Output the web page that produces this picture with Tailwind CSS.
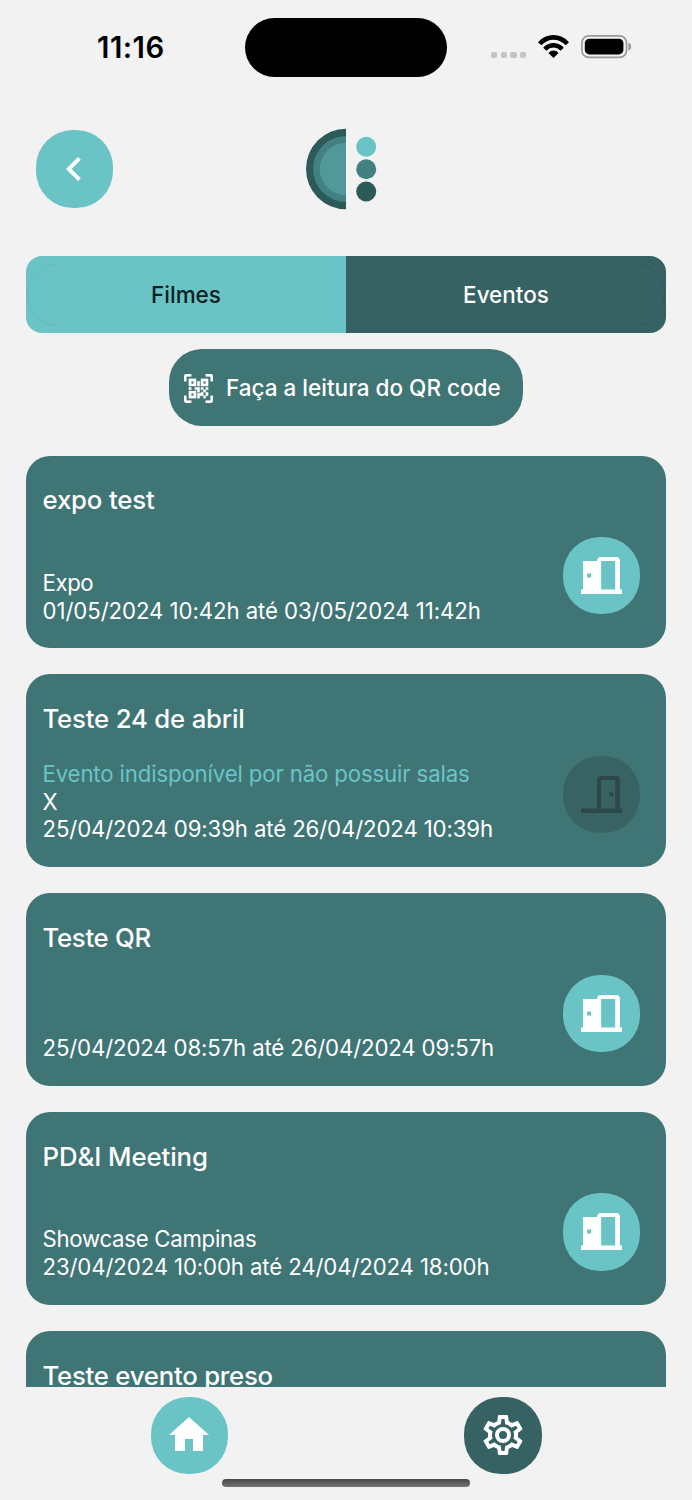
<!DOCTYPE html>
<html lang="pt-BR">
<head>
<meta charset="utf-8">
<meta name="viewport" content="width=device-width, initial-scale=1">
<title>Eventos</title>
<script src="https://cdn.jsdelivr.net/npm/@tailwindcss/browser@4"></script>
</head>
<body class="bg-[#f2f2f2] font-['Inter',sans-serif]">
<svg class="hidden" xmlns="http://www.w3.org/2000/svg">
  <symbol id="door-open" viewBox="0 0 77 77">
    <path fill-rule="evenodd" d="M20 24H34V23.500Q34 20 38 20H53Q56.700 20 56.700 24V52.300H58.700V56.700H18V52.300H20ZM38 24V52.300H52V24ZM24 36.300V40.300H28V36.300Z"/>
  </symbol>
  <symbol id="door-closed" viewBox="0 0 77 77">
    <path fill-rule="evenodd" d="M34 52.300V24Q34 20 38 20H53Q56.700 20 56.700 24V52.300H58.700V56.700H18V52.300ZM38 24V52.300H52V24ZM46 36.300V40.300H50V36.300Z"/>
  </symbol>
</svg>
<div class="w-[692px] h-[1500px] overflow-hidden flex flex-col">
  <header class="h-[96px] shrink-0 flex items-start pl-[97px] pt-[18px]">
    <div class="w-[148px] pt-[12px] text-[29.300px] leading-[36px] font-semibold tracking-[0.500px] whitespace-nowrap text-black">11:16</div>
    <div class="w-[202px] h-[59px] rounded-[30px] bg-black"></div>
    <div class="flex gap-[3.500px] ml-[44px] mt-[33.500px]">
      <i class="size-[6.200px] rounded-[2px] bg-[#c4c4c4]"></i><i class="size-[6.200px] rounded-[2px] bg-[#c4c4c4]"></i><i class="size-[6.200px] rounded-[2px] bg-[#c4c4c4]"></i><i class="size-[6.200px] rounded-[2px] bg-[#c4c4c4]"></i>
    </div>
    <svg class="ml-[12px] mt-[17px] w-[31px] h-[23px]" viewBox="0 0 31 23" fill="none" stroke="#000">
      <path stroke-width="4.600" d="M1.600 8.800Q7.500 2.400 15.500 2.400T29.400 8.800"/>
      <path stroke-width="4.400" d="M6.800 14.200Q10.500 10.300 15.500 10.300T24.200 14.200"/>
      <path fill="#000" stroke="none" d="M15.500 22.900L10.400 17.900Q12.600 15.600 15.500 15.600T20.600 17.900Z"/>
    </svg>
    <svg class="ml-[12px] mt-[17px] w-[51px] h-[24px]" viewBox="0 0 51 24"><rect x=".9" y=".9" width="44.600" height="21.500" rx="7" fill="none" stroke="#9b9b9b" stroke-width="1.700"/><rect x="3.800" y="3.800" width="38.600" height="15.600" rx="4.500"/><path d="M47.300 7.800Q50.200 8.700 50.200 11.700T47.300 15.500Z" fill="#9b9b9b"/></svg>
  </header>

  <nav class="h-[160px] shrink-0 flex pl-[35.500px] pt-[34px]">
    <button class="size-[77.500px] rounded-[37px] bg-[#6ac4c6] flex items-center justify-center">
      <svg class="size-[48px]" viewBox="0 0 24 24" fill="#fff"><path d="M15.410 16.580L10.830 12L15.410 7.410L14 6L8 12L14 18Z"/></svg>
    </button>
    <svg class="ml-[193px] -mt-[2px] w-[71px] h-[82px]" viewBox="0 0 71 82">
      <path fill="#2c5a59" d="M40 .8A40 40.200 0 0 0 40 81.200Z"/>
      <path fill="#438081" d="M40 8A33 33 0 0 0 40 74Z"/>
      <path fill="#509899" d="M40 14.700A26.300 26.300 0 0 0 40 67.300Z"/>
      <circle cx="60.200" cy="18.800" r="10" fill="#6ac4c6"/><circle cx="60.200" cy="41.200" r="10" fill="#438081"/><circle cx="60.200" cy="63.500" r="10" fill="#2c5a59"/>
    </svg>
  </nav>

  <div class="mx-[26px] h-[77.200px] shrink-0 flex rounded-[16px] overflow-hidden text-[22.500px] font-medium tracking-[-0.020px]">
    <button class="relative flex-1 bg-[#6ac4c6] text-[#0e2021]">Filmes
      <svg class="absolute left-0 top-0 w-[60px] h-[77px]" viewBox="0 0 60 77" fill="none" stroke="#5fb5b7" stroke-width=".6"><path d="M29 8C13 9.500 1.500 22 1.500 38.500S13 67.500 29 69.500"/></svg>
    </button>
    <button class="relative flex-1 bg-[#366263] text-white">Eventos
      <svg class="absolute right-0 top-0 w-[60px] h-[77px]" viewBox="0 0 60 77" fill="none" stroke="#2f5859" stroke-width=".6"><path d="M31 8C47 9.500 58.500 22 58.500 38.500S47 67.500 31 69.500"/></svg>
    </button>
  </div>

  <button class="mt-[16px] mx-auto w-[354px] h-[77.300px] shrink-0 rounded-[33px] bg-[#407576] flex items-center pl-[15px] gap-[13px] text-white text-[22.500px] font-medium tracking-[0.010px] whitespace-nowrap">
    <svg class="mt-px size-[29px] shrink-0" viewBox="0 0 24 24" fill="#fff" stroke="#fff" stroke-width=".25"><path d="M4,4H10V10H4V4M20,4V10H14V4H20M14,15H16V13H14V11H16V13H18V11H20V13H18V15H20V18H18V20H16V18H13V20H11V16H14V15M16,15V18H18V15H16M4,20V14H10V20H4M6,6V8H8V6H6M16,6V8H18V6H16M6,16V18H8V16H6M4,11H6V13H4V11M9,11H13V15H11V13H9V11M11,6H13V10H11V6M2,2V6H0V2A2,2 0 0,1 2,0H6V2H2M22,0A2,2 0 0,1 24,2V6H22V2H18V0H22M2,18V22H6V24H2A2,2 0 0,1 0,22V18H2M22,22V18H24V22A2,2 0 0,1 22,24H18V22H22Z"/></svg>
    <span>Faça a leitura do QR code</span>
  </button>

  <main class="mt-[29.200px] mx-[26px] h-[931.300px] shrink-0 overflow-hidden flex flex-col gap-[26px] text-white text-[22.200px] leading-[27.400px] tracking-[-0.120px] whitespace-nowrap">
    <article class="h-[192.750px] shrink-0 rounded-[24px] bg-[#407576] flex justify-between pl-[16.500px] pr-[25.800px] pt-[26.600px] pb-[24.500px]">
      <div class="flex flex-col justify-between">
        <h2 class="text-[25.750px] leading-[36px] font-medium tracking-[-0.160px]">expo test</h2>
        <div><p class="tracking-[-0.400px]">Expo</p><p class="tracking-[-0.070px]">01/05/2024 10:42h até 03/05/2024 11:42h</p></div>
      </div>
      <button class="self-end mb-[9.700px] size-[77.300px] rounded-[37px] bg-[#6ac4c6]"><svg class="size-full" fill="#fff"><use href="#door-open"/></svg></button>
    </article>
    <article class="h-[192.750px] shrink-0 rounded-[24px] bg-[#407576] flex justify-between pl-[16.500px] pr-[25.800px] pt-[26.600px] pb-[24.800px]">
      <div class="flex flex-col justify-between">
        <h2 class="text-[25.750px] leading-[36px] font-medium tracking-[-0.190px]">Teste 24 de abril</h2>
        <div><p class="text-[#6ac4c6] tracking-[-0.140px]">Evento indisponível por não possuir salas</p><p>X</p><p>25/04/2024 09:39h até 26/04/2024 10:39h</p></div>
      </div>
      <button class="self-end mb-[9.500px] size-[77.300px] rounded-[37px] bg-[#396263]"><svg class="size-full" fill="#2d484a"><use href="#door-closed"/></svg></button>
    </article>
    <article class="h-[192.750px] shrink-0 rounded-[24px] bg-[#407576] flex justify-between pl-[16.500px] pr-[25.800px] pt-[26.600px] pb-[24.500px]">
      <div class="flex flex-col justify-between">
        <h2 class="text-[25.750px] leading-[36px] font-medium tracking-[-0.300px]">Teste QR</h2>
        <div><p class="tracking-[-0.140px]">25/04/2024 08:57h até 26/04/2024 09:57h</p></div>
      </div>
      <button class="self-end mb-[9.500px] size-[77.300px] rounded-[37px] bg-[#6ac4c6]"><svg class="size-full" fill="#fff"><use href="#door-open"/></svg></button>
    </article>
    <article class="h-[192.750px] shrink-0 rounded-[24px] bg-[#407576] flex justify-between pl-[16.500px] pr-[25.800px] pt-[26.600px] pb-[24.500px]">
      <div class="flex flex-col justify-between">
        <h2 class="text-[25.750px] leading-[36px] font-medium tracking-[-0.070px]">PD&amp;I Meeting</h2>
        <div><p class="tracking-[-0.270px]">Showcase Campinas</p><p>23/04/2024 10:00h até 24/04/2024 18:00h</p></div>
      </div>
      <button class="self-end mb-[9.500px] size-[77.300px] rounded-[37px] bg-[#6ac4c6]"><svg class="size-full" fill="#fff"><use href="#door-open"/></svg></button>
    </article>
    <article class="h-[192.750px] shrink-0 rounded-[24px] bg-[#407576] pl-[16.500px] pt-[27px]">
      <h2 class="text-[25.750px] leading-[36px] font-medium tracking-[-0.240px]">Teste evento preso</h2>
    </article>
  </main>

  <footer class="flex-1 flex flex-col items-center pt-[9.700px]">
    <div class="w-[391px] flex justify-between">
      <button class="size-[77.300px] rounded-[37px] bg-[#6ac4c6] flex items-center justify-center">
        <svg class="size-[48px]" viewBox="0 0 24 24" fill="#fff"><path d="M10,20V14H14V20H19V12H22L12,3L2,12H5V20H10Z"/></svg>
      </button>
      <button class="size-[77.300px] rounded-[37px] bg-[#366263] flex items-center justify-center">
        <svg class="size-[48px]" viewBox="0 0 24 24" fill="#fff"><path d="M12,8A4,4 0 0,1 16,12A4,4 0 0,1 12,16A4,4 0 0,1 8,12A4,4 0 0,1 12,8M12,10A2,2 0 0,0 10,12A2,2 0 0,0 12,14A2,2 0 0,0 14,12A2,2 0 0,0 12,10M10,22C9.75,22 9.54,21.82 9.5,21.58L9.13,18.93C8.5,18.68 7.96,18.34 7.44,17.94L4.95,18.95C4.73,19.03 4.46,18.95 4.34,18.73L2.34,15.27C2.21,15.05 2.27,14.78 2.46,14.63L4.57,12.97L4.5,12L4.57,11L2.46,9.37C2.27,9.22 2.21,8.95 2.34,8.73L4.34,5.27C4.46,5.05 4.73,4.96 4.95,5.05L7.44,6.05C7.96,5.66 8.5,5.32 9.13,5.07L9.5,2.42C9.54,2.18 9.75,2 10,2H14C14.25,2 14.46,2.18 14.5,2.42L14.87,5.07C15.5,5.32 16.04,5.66 16.56,6.05L19.05,5.05C19.27,4.96 19.54,5.05 19.66,5.27L21.66,8.73C21.79,8.95 21.73,9.22 21.54,9.37L19.43,11L19.5,12L19.43,13L21.54,14.63C21.73,14.78 21.79,15.05 21.66,15.27L19.66,18.73C19.54,18.95 19.27,19.04 19.05,18.95L16.56,17.95C16.04,18.34 15.5,18.68 14.87,18.93L14.5,21.58C14.46,21.82 14.25,22 14,22H10M11.25,4L10.88,6.61C9.68,6.86 8.62,7.5 7.85,8.39L5.44,7.35L4.69,8.65L6.8,10.2C6.4,11.37 6.4,12.64 6.8,13.8L4.68,15.36L5.43,16.66L7.86,15.62C8.63,16.5 9.68,17.14 10.87,17.38L11.24,20H12.76L13.13,17.39C14.32,17.14 15.37,16.5 16.14,15.62L18.57,16.66L19.32,15.36L17.2,13.81C17.6,12.64 17.6,11.37 17.2,10.2L19.31,8.65L18.56,7.35L16.15,8.39C15.38,7.5 14.32,6.86 13.12,6.62L12.75,4H11.25Z"/></svg>
      </button>
    </div>
    <div class="mt-[5px] w-[248px] h-[8px] rounded-full bg-linear-to-b from-[#484848] to-[#747474]"></div>
  </footer>
</div>
</body>
</html>
